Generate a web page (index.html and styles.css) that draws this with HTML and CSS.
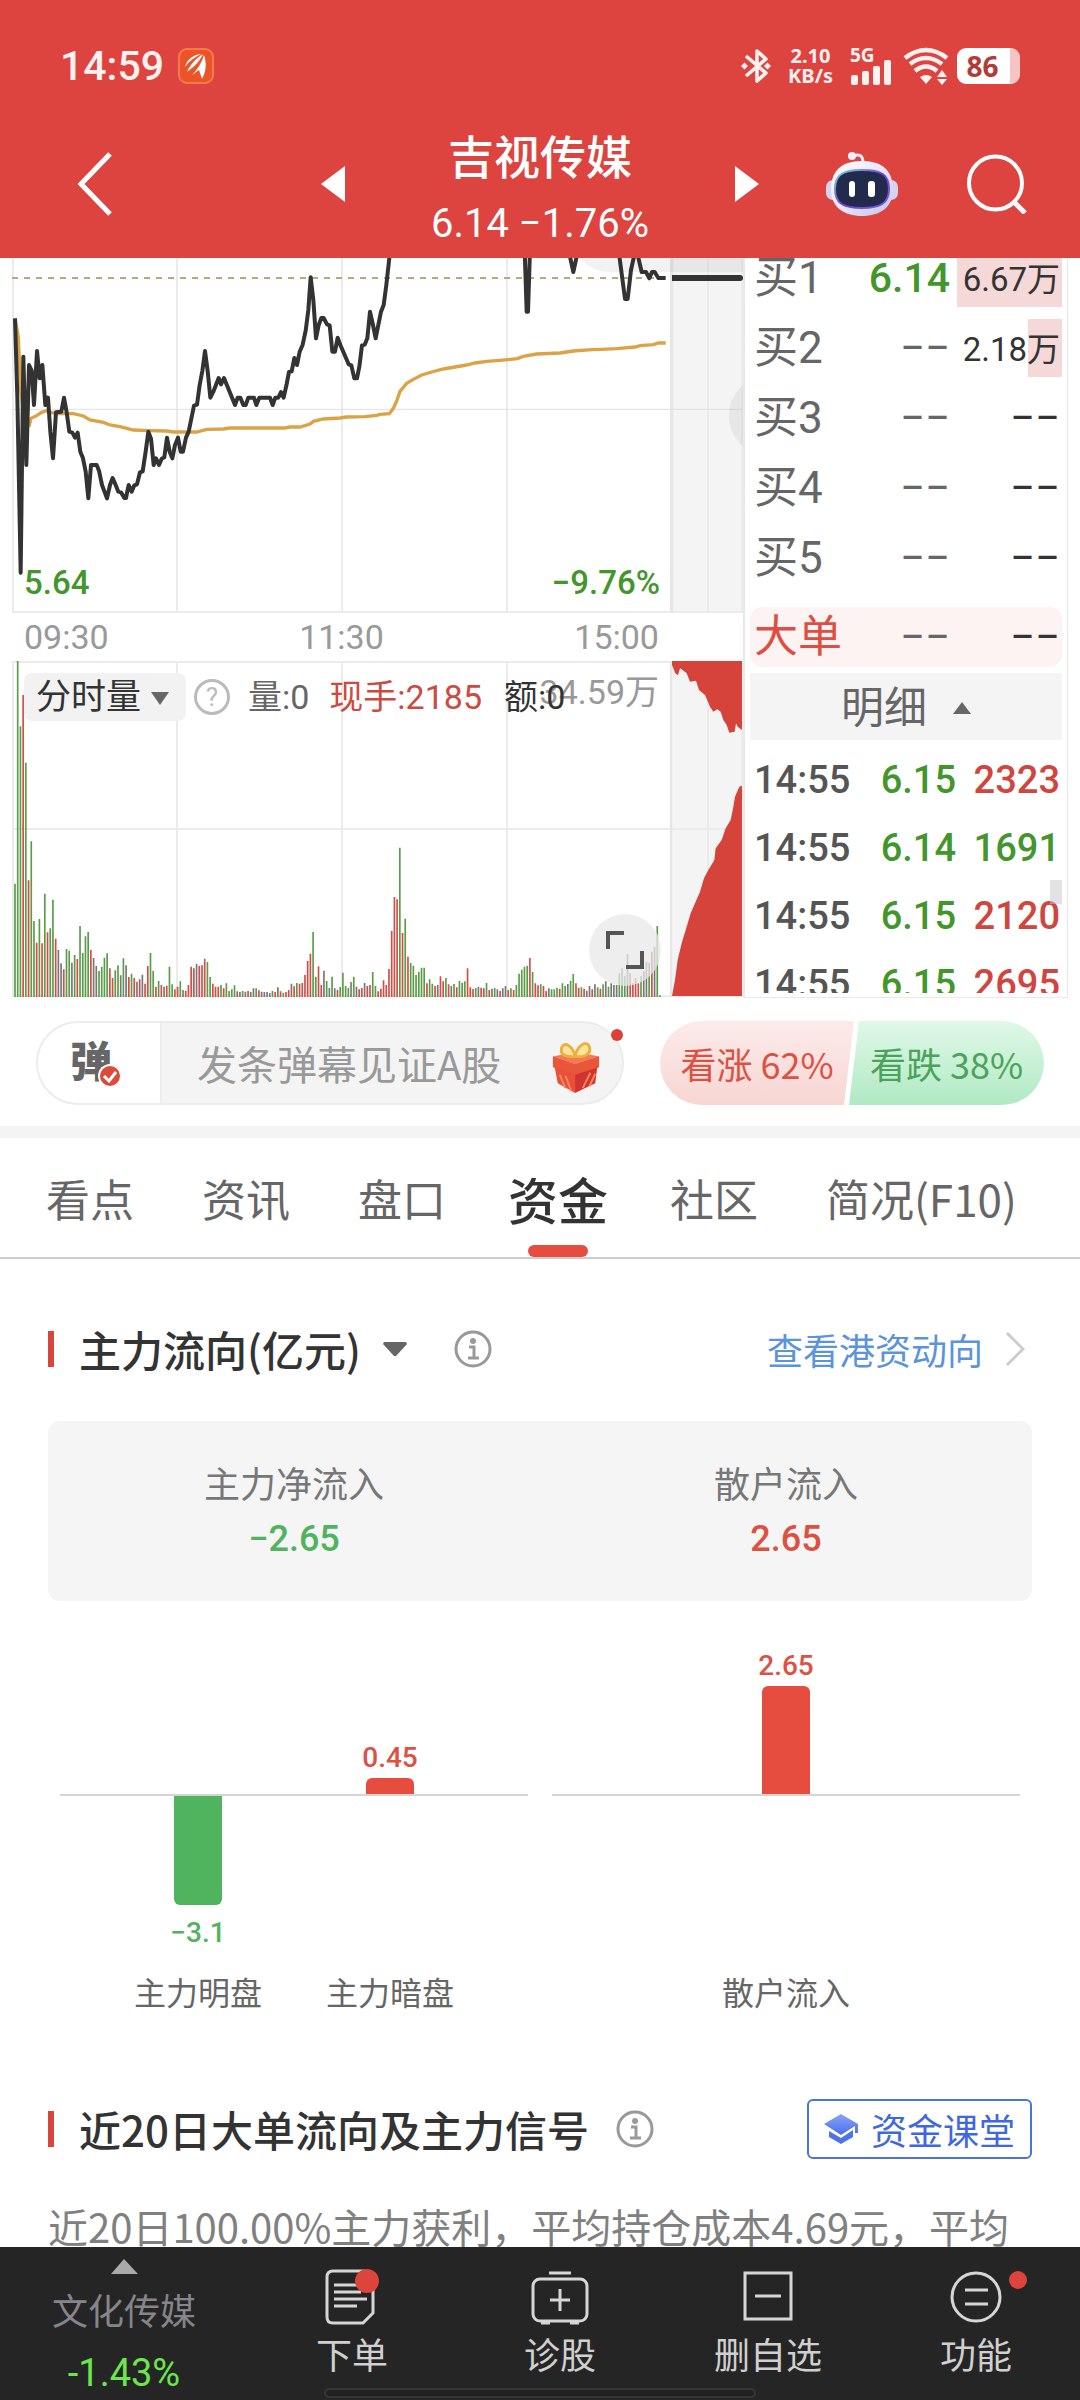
FILE: index.html
```html
<!DOCTYPE html>
<html lang="zh-CN">
<head>
<meta charset="utf-8">
<meta name="viewport" content="width=device-width, initial-scale=1">
<title>吉视传媒</title>
<link rel="stylesheet" href="styles.css">
</head>
<body>
<header class="top">
  <div class="status">
    <span class="clock">14:59</span>
    <svg class="app-badge" width="36" height="36" viewBox="0 0 36 36"><rect x="1" y="1" width="34" height="34" rx="8" fill="#ec5427" stroke="#f27c4f" stroke-width="2"/><path d="M7 19C9 11 15 7 23 6C17 9 11 13 7 19ZM9 24C13 15 19 10 25 6C22 13 16 19 9 24ZM14 27C20 21 24 14 26 7C29 15 28 24 24 31L21 22Z" fill="#fff"/></svg>
    <div class="status-right">
      <svg width="30" height="38" viewBox="0 0 30 38" fill="none" stroke="#fff1f0" stroke-width="3.6"><path d="M5 9L25 26L16 34V4L25 12L5 29" stroke-linejoin="round"/><path d="M0 19L3.500 15.500L7 19L3.500 22.500ZM23 19L26.500 15.500L30 19L26.500 22.500Z" fill="#fff1f0" stroke="none"/></svg>
      <span class="speed">2.10<br>KB/s</span>
      <div class="signal"><span>5G</span><svg width="42" height="26" viewBox="0 0 42 26" fill="#fff1f0"><rect x="1" y="16" width="7" height="10" rx="2"/><rect x="12" y="12" width="7" height="14" rx="2"/><rect x="23" y="7" width="7" height="19" rx="2"/><rect x="34" y="1" width="7" height="25" rx="2"/></svg></div>
      <svg class="wifi" width="46" height="38" viewBox="0 0 46 38" fill="none" stroke="#fff1f0" stroke-width="4.500"><path d="M2 11Q23 -5 44 11M7 17Q23 5 39 17M12 24Q23 15 34 24"/><path d="M17 30Q23 26 29 30L23 37ZM34 30L39 23L44 30ZM34 32H44L39 38Z" fill="#fff1f0" stroke="none"/></svg>
      <div class="battery"><span>86</span></div>
    </div>
  </div>
  <div class="titlebar">
    <button class="plain back" aria-label="返回"><svg width="36" height="64" viewBox="0 0 36 64"><path d="M33 2L4 32L33 62" fill="none" stroke="#fff" stroke-width="5"/></svg></button>
    <div class="switcher">
      <button class="plain" aria-label="上一只"><svg width="24" height="36"><path d="M24 0V36L0 18Z" fill="#fff"/></svg></button>
      <div class="stock"><h1>吉视传媒</h1><p>6.14 −1.76%</p></div>
      <button class="plain" aria-label="下一只"><svg width="24" height="36"><path d="M0 0V36L24 18Z" fill="#fff"/></svg></button>
    </div>
    <div class="tools">
      <button class="plain" aria-label="智能助手"><svg width="72" height="68" viewBox="0 0 72 68"><defs><linearGradient id="shell" x1="0" y1="0" x2="1" y2="1"><stop offset="0" stop-color="#fff"/><stop offset=".5" stop-color="#e8e6f8"/><stop offset="1" stop-color="#c4c4ec"/></linearGradient><linearGradient id="rim" x1="0" y1="0" x2="1" y2="1"><stop offset="0" stop-color="#7fd6e0"/><stop offset=".5" stop-color="#6f3fd0"/><stop offset="1" stop-color="#7a5be0"/></linearGradient></defs><path d="M27 6Q37 2 37 13" fill="none" stroke="#efeefb" stroke-width="3"/><circle cx="26" cy="6" r="4" fill="#efeefb"/><rect x="0" y="30" width="14" height="20" rx="7" fill="#d4d3f0"/><rect x="58" y="30" width="14" height="20" rx="7" fill="#d4d3f0"/><path d="M36 11C58 11 67 22 67 40C67 57 54 66 36 66C18 66 5 57 5 40C5 22 14 11 36 11Z" fill="url(#shell)"/><path d="M36 20C56 20 63 25 63 39C63 53 55 58 36 58C17 58 9 53 9 39C9 25 16 20 36 20Z" fill="#232b4c" stroke="url(#rim)" stroke-width="2"/><rect x="23" y="31" width="6" height="16" rx="3" fill="#fff"/><rect x="42" y="31" width="7" height="16" rx="3" fill="#fff"/></svg></button>
      <button class="plain" aria-label="搜索"><svg width="60" height="60" viewBox="0 0 60 60" fill="none" stroke="#fff"><circle cx="28.500" cy="29" r="26.500" stroke-width="4"/><path d="M47 48L58 59" stroke-width="5"/></svg></button>
    </div>
  </div>
</header>

<main class="feed">
  <section class="quote">
    <div class="charts">
      <div class="plot">
        <svg class="fill price" viewBox="0 24 2229 1065" preserveAspectRatio="none">
          <rect x="2010" y="24" width="222" height="1065" fill="#f4f4f4"/>
          <path d="M39 24V1089M531 24V1089M1026 24V1089M1521 24V1089M2124 24V1089M2227 24V1089M36 1086H2229" stroke="#ebebeb" stroke-width="6" fill="none"/>
          <path d="M36 478H2229" stroke="#e0e0e0" stroke-width="3"/>
          <path d="M2015 24V1089" stroke="#e6e6e6" stroke-width="10"/>
          <path d="M1735 20Q1775 66 1830 66H2232V20Z" fill="#000" opacity=".05"/>
          <circle cx="2307" cy="497" r="121" fill="#000" opacity=".05"/>
          <path d="M36 84H1990" stroke="#b9a77f" stroke-width="6" stroke-dasharray="18 18"/>
          <path d="M45 205L55 260L62 420L75 520L88 525L93 505L110 497L125 487L140 482L155 488L175 491H220L250 498L270 510L310 517L330 525L360 530L400 540L450 542L500 543L520 546H590L620 538L670 537L690 534H855L870 531H900L930 522L940 514L970 507L1020 504L1040 501L1095 500L1130 496L1140 493L1168 491L1180 475L1190 453L1200 424L1220 400L1240 388L1265 375L1295 366L1330 357L1400 345L1425 339L1460 334L1500 331L1552 326L1570 319L1610 312L1680 309L1720 303L1775 299L1805 298L1850 296L1905 291L1920 287L1960 284L1975 279H1997" fill="none" stroke="#dba345" stroke-width="10"/>
          <path id="price-line" fill="none" stroke="#333" stroke-width="12" stroke-linejoin="round" d="M45 205L52 440L62 968L70 320L79 645L87 345L95 362L102 465L111 303L119 385L127 345L136 465L144 443L151 545L159 625L168 487L184 485L192 443L200 487L208 545L217 548L225 563L233 548L241 605L249 625L257 665L265 745L273 645H290L297 662L306 705L321 745L330 705L338 684L347 705L355 725L363 727L373 744H378L386 705L395 725L403 706L411 703L420 667L428 664L437 605L445 545L453 566L461 645L468 625L477 645L485 626L493 622L501 563L509 605L517 625L525 585L534 563L542 605H549L558 563L566 545L582 467L591 464L599 405L607 363L615 303L623 363L631 443L640 425L656 384L663 403L672 384L705 465L713 443H721L730 465H737L745 443H762L769 465L778 443H810L818 465L826 443H835L843 426L851 443L860 402L867 366L875 364L883 324L891 345L899 305L908 284L917 242L925 180L932 82L940 150L948 265L956 225L964 204H971L981 223L989 226L997 305H1005L1013 263L1021 285L1046 343L1054 346L1063 385H1071L1078 350L1086 286L1094 284L1102 265L1110 185L1119 225L1127 265L1143 185L1151 165L1159 105L1168 24V0M1574 0L1580 185H1584L1590 0M1710 20L1720 66L1730 20M1857 10L1875 147H1883L1893 60L1904 10M1912 10L1925 66H1938L1948 85L1956 66H1964L1975 84H1997"/>
          <path d="M2016 84H2220" stroke="#333" stroke-width="18"/><circle cx="2220" cy="84" r="9" fill="#333"/>
        </svg>
        <div class="range"><span>5.64</span><span>−9.76%</span></div>
      </div>
      <div class="axis"><span>09:30</span><span>11:30</span><span>15:00</span></div>
      <div class="plot volume">
        <svg class="fill" viewBox="0 63 2229 1011" preserveAspectRatio="none">
          <rect x="2010" y="63" width="222" height="1008" fill="#f4f4f4"/>
          <path d="M39 63V1071M531 63V1071M1026 63V1071M1521 63V1071M2124 63V1071M2227 63V1071M36 66H2010M36 567H2229M36 1069H2229" stroke="#ebebeb" stroke-width="6" fill="none"/>
          <path d="M2013 63V1071" stroke="#e6e6e6" stroke-width="7"/>
          <g id="volume-bars"></g>
          <path fill="#d6433b" d="M2016 63H2226V270L2213 260L2208 250L2204 275L2188 278L2180 255L2170 240L2162 215L2152 208L2140 215L2130 200L2115 165L2097 150L2088 122L2070 125L2060 100L2045 88L2040 85L2034 106L2026 100L2016 75ZM2016 1068L2025 1020L2033 960L2045 910L2060 860L2072 820L2085 790L2100 755L2112 715L2125 690L2143 660L2147 625L2165 600L2177 565L2192 540L2200 500L2205 470L2218 440L2226 437V1068Z"/>
        </svg>
        <div class="legend">
          <button class="metric">分时量<svg width="18" height="13"><path d="M0 0H18L9 13Z" fill="#666"/></svg></button>
          <button class="help" aria-label="说明">?</button>
          <span class="vol">量:0</span><span class="now">现手:2185</span><span class="amt">额:0</span>
        </div>
        <span class="peak">34.59万</span>
        <button class="expand" aria-label="全屏"><svg width="38" height="38" fill="none" stroke="#555" stroke-width="4"><path d="M2 18V2H18M36 20V36H20"/></svg></button>
      </div>
    </div>
    <aside class="book">
      <div class="bids">
        <div class="bid"><span>买1</span><b class="down">6.14</b><em class="w-full">6.67万</em></div>
        <div class="bid"><span>买2</span><b>−−</b><em class="w-part">2.18万</em></div>
        <div class="bid"><span>买3</span><b>−−</b><em class="none">−−</em></div>
        <div class="bid"><span>买4</span><b>−−</b><em class="none">−−</em></div>
        <div class="bid"><span>买5</span><b>−−</b><em class="none">−−</em></div>
      </div>
      <div class="bid big"><span>大单</span><b>−−</b><em class="none">−−</em></div>
      <button class="detail">明细<svg width="18" height="12"><path d="M0 12H18L9 0Z" fill="#666"/></svg></button>
      <div class="trade-list">
        <table class="trades">
          <tr><td>14:55</td><td class="down">6.15</td><td class="up">2323</td></tr>
          <tr><td>14:55</td><td class="down">6.14</td><td class="down">1691</td></tr>
          <tr><td>14:55</td><td class="down">6.15</td><td class="up">2120</td></tr>
          <tr><td>14:55</td><td class="down">6.15</td><td class="up">2695</td></tr>
        </table>
        <i class="thumb"></i>
      </div>
    </aside>
  </section>

  <section class="barrage">
    <div class="compose">
      <button class="toggle" aria-label="弹幕开关"><b>弹</b><svg width="24" height="24" viewBox="0 0 24 24"><circle cx="12" cy="12" r="11" fill="#dc4a3c" stroke="#fff" stroke-width="2"/><path d="M6 12L11 17L18 8" fill="none" stroke="#fff" stroke-width="3"/></svg></button>
      <input type="text" placeholder="发条弹幕见证A股" aria-label="发条弹幕">
      <svg class="gift" width="48" height="54" viewBox="0 0 50 54"><path d="M1 15L24 23V53L6 43L3 27L1 26Z" fill="#e8503a"/><path d="M49 15L24 23V53L45 43L47 27L49 26Z" fill="#cf3430"/><path d="M1 15L25 10L49 15L24 23Z" fill="#f47a55"/><path d="M1 15V26L24 34V23ZM49 15V26L24 34V23Z" fill="#ea5639"/><path d="M8 34L14 48M14 35L20 51M40 32L32 48M45 33L39 46" stroke="#f4875a" stroke-width="2"/><path d="M24 15C14 16 8 13 10 6C13 -2 22 5 24 15C26 4 36 -3 39 5C41 13 34 16 24 15Z" fill="#fbe3a0" stroke="#eeb03c" stroke-width="3"/></svg>
      <i class="dot"></i>
    </div>
    <div class="vote"><button class="rise">看涨 62%</button><button class="fall">看跌 38%</button></div>
  </section>

  <nav class="tabs">
    <a href="#">看点</a><a href="#">资讯</a><a href="#">盘口</a><a href="#" class="active">资金</a><a href="#">社区</a><a href="#">简况(F10)</a>
  </nav>

  <section class="flow">
    <div class="head">
      <h2>主力流向(亿元)</h2>
      <svg width="24" height="14"><path d="M1 0H23L24 2L13 14H11L0 2Z" fill="#666"/></svg>
      <button class="info" aria-label="说明"><svg width="38" height="38" fill="none" stroke="#999" stroke-width="3"><circle cx="19" cy="19" r="17"/><path d="M15 17H20V27M14 28H25"/><circle cx="19" cy="11" r="3" fill="#999" stroke="none"/></svg></button>
      <a href="#" class="more">查看港资动向<svg width="20" height="36"><path d="M2 2L18 18L2 34" fill="none" stroke="#ccc" stroke-width="3"/></svg></a>
    </div>
    <div class="summary">
      <div><span>主力净流入</span><b class="green">−2.65</b></div>
      <div><span>散户流入</span><b class="red">2.65</b></div>
    </div>
    <div class="bars">
      <div class="group two">
        <div class="col"><div class="above"></div><div class="below"><i class="bar" style="height:110px"></i><b class="green">−3.1</b></div><span>主力明盘</span></div>
        <div class="col"><div class="above"><b class="red">0.45</b><i class="bar" style="height:16px"></i></div><div class="below"></div><span>主力暗盘</span></div>
      </div>
      <div class="group">
        <div class="col"><div class="above"><b class="red">2.65</b><i class="bar" style="height:108px"></i></div><div class="below"></div><span>散户流入</span></div>
      </div>
    </div>
  </section>

  <section class="signal-block">
    <div class="head">
      <h2>近20日大单流向及主力信号</h2>
      <button class="info" aria-label="说明"><svg width="38" height="38" fill="none" stroke="#999" stroke-width="3"><circle cx="19" cy="19" r="17"/><path d="M15 17H20V27M14 28H25"/><circle cx="19" cy="11" r="3" fill="#999" stroke="none"/></svg></button>
      <button class="lesson"><svg width="34" height="32" viewBox="0 0 34 32"><defs><linearGradient id="cap" x1="0" y1="0" x2="0" y2="1"><stop offset="0" stop-color="#8aa4fa"/><stop offset="1" stop-color="#4a6fe8"/></linearGradient></defs><path d="M17 1L34 11V20H31V13L17 22L0 11Z" fill="url(#cap)"/><path d="M5 18L17 25L29 17V24L17 31L5 24Z" fill="#4f74ea"/></svg>资金课堂</button>
    </div>
    <p>近20日100.00%主力获利，平均持仓成本4.69元，平均</p>
  </section>
</main>

<footer class="dock">
  <button class="sector"><svg width="27" height="15"><path d="M0 15L13 0L27 15Z" fill="#aaa"/></svg><span>文化传媒</span><b>-1.43%</b></button>
  <button><svg width="54" height="56" fill="none" stroke="#d6d6d6" stroke-width="3"><path d="M8 2H38Q48 2 48 10V44L38 54H8Q2 54 2 48V8Q2 2 8 2Z"/><path d="M9 16H32M9 23H36M9 30H42M9 37H32"/><circle cx="42" cy="12" r="12" fill="#dd443c" stroke="none"/></svg><span>下单</span></button>
  <button><svg width="58" height="56" fill="none" stroke="#d6d6d6" stroke-width="3"><rect x="2" y="10" width="54" height="42" rx="7"/><path d="M18 4H40M29 20V42M19 31H39M10 54H19M39 54H48"/></svg><span>诊股</span></button>
  <button><svg width="50" height="56" fill="none" stroke="#d6d6d6" stroke-width="3"><rect x="2" y="4" width="46" height="46"/><path d="M12 27H38"/></svg><span>删自选</span></button>
  <button class="fn"><svg width="54" height="56" fill="none" stroke="#d6d6d6" stroke-width="3"><circle cx="27" cy="28" r="24"/><path d="M16 21H39M16 35H39"/></svg><span>功能</span></button>
  <i class="home"></i>
</footer>
<script src="volume.js"></script>
</body>
</html>
```
FILE: volume.js
```js
// One entry per trading minute: colour key (g fall, r rise, k flat) and the y of the bar's top.
const data = `g731 g63 g259 r165 g368 r721 g604 g843 r908 g837 r910 g761 r877 g865 g779 r896 k930 k970 r988 g927
g932 k968 g945 r957 g858 g939 g889 g876 r930 k954 k978 g993 g980 g953 g940 r985 r1014 g991 g976 k1006
g955 k976 r1011 g1001 r1014 k1025 r1018 k1004 r1031 r978 g939 g993 r1040 g1023 r1035 k1040 r1037 g980 g1033 r1048
r1040 g1024 k1050 r1052 r1035 r980 r985 k972 r977 r976 r956 g966 g1011 r1031 r1040 r1040 g1035 r1045 g1030 g1053
g1048 g1036 r1054 k1056 g1053 k1055 r1053 k1056 k1045 g1045 r1051 k1055 k1056 k1056 k1059 g1053 r1056 k1042 r1054 g1058
r1056 r1050 k1031 r1039 g1029 r1031 r1029 r1005 r963 r941 g876 g1010 r979 r1035 k992 g1023 k1044 g1010 k1045 r1050
g1041 g998 g1038 g1044 k1026 g1010 k1040 r1048 r1044 k1029 r1038 r1035 g996 g1038 r1054 r1046 r1021 r1035 r987 r873
r771 r778 g623 r879 g836 r950 g969 g977 g1005 g995 g983 g983 r1030 g1018 g1031 r1038 k1035 r1009 r1024 g1014
r1033 k1038 g1032 r1042 g1023 g1028 g1024 r985 r1042 r1047 g1044 k1040 r1043 r1045 g1029 r1050 k1046 g1044 k1048 r1053
k1045 k1038 r1050 g1045 r1050 g1035 g1001 g989 g980 g977 r954 g996 r1030 r1036 g1033 r1038 r1053 k1045 g1048 g1048
g1043 r1046 g1030 g1038 k1032 g1022 g1002 r1030 r1043 g1042 r1046 k1052 k1038 r1048 k1033 g1042 r1046 g1033 k1024 g1040
k1030 k1035 k1035 g1000 g985 g1008 k942 r1000 r1030 r1014 r1030 g1008 k993 k965 g968 r935 k920 g858 k1066`.split(/\s+/);
const paths = { g: "", r: "", k: "" };
data.forEach((item, i) => {
  paths[item[0]] += `M${(45 + i * 8.13).toFixed(1)} 1071V${item.slice(1)}`;
});
const colors = { g: "#5a9c48", r: "#cf4f48", k: "#777" };
document.getElementById("volume-bars").innerHTML = Object.keys(paths)
  .map((k) => `<path d="${paths[k]}" stroke="${colors[k]}" stroke-width="5"/>`)
  .join("");
```
FILE: styles.css
```css
* { box-sizing: border-box; margin: 0; padding: 0; }
html, body { height: 100%; }
body {
  display: flex;
  flex-direction: column;
  background: #fff;
  color: #333;
  font-family: Roboto, "Noto Sans CJK SC", sans-serif;
}
svg { display: block; flex: none; }
button { border: 0; background: none; font: inherit; color: inherit; cursor: pointer; }
a { color: inherit; text-decoration: none; }
em, i { font-style: normal; }
.up { color: #d0453d; }
.down { color: #43962c; }
.green { color: #52b35f; }
.red { color: #dd5143; }

/* header */
.top { flex: none; background: #dd443f; color: #fff; padding-top: 42px; }
.status { display: flex; align-items: center; height: 48px; padding: 0 60px; color: #fff1f0; }
.clock { font-size: 41px; font-weight: 500; }
.app-badge { margin-left: 14px; }
.status-right { display: flex; align-items: center; gap: 17px; margin-left: auto; }
.speed { font: 700 20px/20px "Noto Sans", sans-serif; text-align: center; }
.signal { display: grid; justify-items: start; font: 700 19px/16px "Noto Sans", sans-serif; }
.signal svg { margin-top: -4px; }
.wifi { margin: 0 -9px 0 -6px; }
.battery {
  display: flex; align-items: center; justify-content: center;
  width: 63px; height: 36px; padding-right: 2px;
  border-radius: 9px; border-right: 10px solid #f5c4c3; background: #fff;
  color: #b33a35; font: 700 28px/36px "Noto Sans", sans-serif;
}
.titlebar { display: grid; grid-template-columns: 1fr 438px 1fr; align-items: center; height: 168px; padding-top: 20px; }
.plain { display: grid; place-items: center; }
.back { justify-self: start; margin-left: 77px; }
.switcher { display: flex; justify-content: space-between; align-items: center; }
.stock { padding-top: 14px; text-align: center; }
.stock h1 { font-size: 46px; line-height: 66px; font-weight: 500; }
.stock p { font-size: 40px; line-height: 66px; }
.tools { display: flex; align-items: center; justify-content: flex-end; gap: 69px; padding-right: 53px; }

/* scrolling content */
.feed { flex: 1; min-height: 0; overflow-y: auto; scrollbar-width: none; }
.quote { display: grid; grid-template-columns: 743fr 325fr; height: 740px; padding-right: 12px; overflow: hidden; }
.charts { display: flex; flex-direction: column; min-width: 0; }
.plot { position: relative; height: 355px; }
.fill { width: 100%; height: 100%; }
.range {
  position: absolute; left: 24px; right: 83px; bottom: 8px;
  display: flex; justify-content: space-between;
  color: #43962c; font-size: 33px; font-weight: 500; line-height: 44px;
}
.axis {
  display: flex; justify-content: space-between; align-items: center;
  height: 48px; padding: 0 84px 0 24px; color: #999; font-size: 34px;
}
.volume { height: 337px; }
.legend {
  position: absolute; left: 24px; top: 12px; z-index: 1;
  display: flex; align-items: center; height: 48px; font-size: 34px; line-height: 44px;
}
.metric {
  display: flex; align-items: center; gap: 10px; width: 162px; height: 48px;
  padding: 2px 0 0 12px; border-radius: 8px; background: #f2f2f2; color: #333;
  font-size: 35px; line-height: 48px; white-space: nowrap;
}
.help {
  width: 36px; height: 36px; margin: 0 18px 0 8px; border: 3px solid #bbb; border-radius: 50%;
  color: #bbb; font-size: 26px; line-height: 30px;
}
.vol { color: #666; margin-right: 20px; }
.now { color: #cc4a40; margin-right: 22px; }
.amt { color: #333; }
.peak { position: absolute; right: 84px; top: 7px; color: #999; font-size: 34px; line-height: 48px; }
.expand {
  position: absolute; right: 82px; bottom: 12px; width: 72px; height: 72px;
  display: grid; place-items: center; border-radius: 50%; background: rgba(232, 232, 232, .75);
}

/* order book */
.book {
  display: flex; flex-direction: column; min-width: 0; padding: 0 5px;
  border: 1px solid #e8e8e8; border-width: 0 1px 1px 2px; overflow: hidden;
}
.bids { display: grid; gap: 12px; margin-top: -9px; }
.bid {
  display: grid; grid-template-columns: 84px 116px 1fr; align-items: center;
  height: 58px; color: #666; font-size: 44px; line-height: 58px;
}
.bid span { padding-left: 4px; white-space: nowrap; }
.bid b { font-weight: 400; text-align: right; }
.bid .down { font-size: 41px; font-weight: 500; }
.bid em { height: 58px; margin-left: 7px; padding-right: 2px; color: #333; font-size: 33px; line-height: 62px; text-align: right; white-space: nowrap; }
.bid .none { font-size: 44px; line-height: 58px; }
.w-full { background: #f5d9d8; }
.w-part { background: linear-gradient(to left, #f5d9d8 34px, transparent 34px); }
.big { height: 60px; margin-top: 20px; border-radius: 12px; background: #fdf3f3; }
.big span { color: #dc4f42; }
.detail {
  display: flex; align-items: center; justify-content: center; gap: 26px;
  height: 67px; margin-top: 6px; padding-top: 2px; flex: none;
  background: #f4f4f4; color: #666; font-size: 43px; line-height: 60px;
}
.trade-list { position: relative; padding-top: 6px; height: 253px; overflow: hidden; }
.trades { width: 100%; border-collapse: collapse; color: #555; font-size: 38px; font-weight: 500; line-height: 68px; }
.trades td { text-align: right; }
.trades td:first-child { text-align: left; padding-left: 4px; }
.trades td:last-child { padding-right: 2px; width: 106px; }
.thumb { position: absolute; right: 0; top: 140px; width: 12px; height: 24px; background: rgba(200, 200, 206, .5); }

/* barrage row */
.barrage {
  display: grid; grid-template-columns: 588fr 384fr; gap: 36px; height: 140px; padding: 23px 36px 21px;
  border-bottom: 12px solid #f4f4f4;
}
.compose {
  position: relative; display: flex; align-items: center; height: 84px; min-width: 0;
  border: 2px solid #ececec; border-radius: 42px; background: #f4f4f4;
}
.toggle {
  display: flex; align-items: center; width: 124px; height: 80px; padding-left: 32px;
  border-right: 2px solid #ececec; border-radius: 40px 0 0 40px; background: #fff; color: #666;
}
.toggle b { font-size: 42px; font-weight: 900; line-height: 60px; }
.toggle svg { margin: 26px 0 0 -14px; }
.compose input {
  flex: 1; min-width: 0; padding-left: 35px; border: 0; outline: 0; background: none;
  color: #333; font: 40px/60px "Noto Sans CJK SC", sans-serif;
}
.compose input::placeholder { color: #999; opacity: 1; }
.gift { margin: 10px 22px 0 0; }
.dot { position: absolute; right: -1px; top: 6px; width: 12px; height: 12px; border-radius: 50%; background: #dc4038; }
.vote { display: grid; grid-template-columns: 194fr 194fr; }
.vote button { height: 84px; font: 36px/84px "Noto Sans CJK SC", sans-serif; white-space: nowrap; }
.rise {
  margin-right: -2px; border-radius: 42px 0 0 42px; color: #dd5143;
  background: linear-gradient(#fcebea, #f7d6d3);
  clip-path: polygon(0 0, 100% 0, calc(100% - 10px) 100%, 0 100%);
}
.fall {
  margin-left: -3px; border-radius: 0 42px 42px 0; color: #4ba35b;
  background: linear-gradient(#e0f8e8, #b0e9c3);
  clip-path: polygon(10px 0, 100% 0, 100% 100%, 0 100%);
}

/* tabs */
.tabs {
  display: flex; gap: 68px; height: 121px; padding: 0 46px; border-bottom: 2px solid #ccc;
  color: #666; font-size: 44px; line-height: 121px; white-space: nowrap;
  font-family: "Noto Sans CJK SC", sans-serif;
}
.active { position: relative; margin: 0 -6px; color: #333; font-size: 50px; font-weight: 500; }
.active::after {
  content: ""; position: absolute; left: 50%; bottom: 0; width: 60px; height: 12px;
  margin-left: -30px; border-radius: 6px; background: #e64d3f;
}

/* section heads */
.head { display: flex; align-items: center; height: 60px; padding: 0 48px; font-family: "Noto Sans CJK SC", sans-serif; }
.head::before { content: ""; width: 6px; height: 36px; background: #d8453b; }
.head h2 { margin-left: 25px; font-size: 42px; font-weight: 500; line-height: 60px; white-space: nowrap; }
.flow h2 { margin-right: 22px; }
.flow .info { margin-left: 47px; }
.signal-block .info { margin-left: 27px; }
.more { display: flex; align-items: center; gap: 22px; margin-left: auto; padding-right: 7px; color: #5b93dd; font-size: 36px; line-height: 60px; }
.lesson {
  display: flex; align-items: center; gap: 13px; height: 60px; margin-left: auto; padding: 0 15px;
  border: 2px solid #4a74d9; border-radius: 6px; color: #3f68e0; font-size: 36px; line-height: 56px;
}

/* fund flow */
.flow { padding-top: 60px; }
.summary {
  display: grid; grid-template-columns: 1fr 1fr; height: 180px; margin: 42px 48px 0; padding-top: 38px;
  border-radius: 12px; background: #f5f5f5; text-align: center;
}
.summary div { display: flex; flex-direction: column; }
.summary span { color: #777; font-size: 36px; line-height: 54px; }
.summary b { font-size: 36px; font-weight: 500; line-height: 52px; }
.bars { display: grid; grid-template-columns: 1fr 1fr; gap: 24px; padding: 0 60px; }
.group { display: grid; position: relative; }
.group::before { content: ""; position: absolute; left: 0; right: 0; top: 193px; height: 2px; background: #d4d4d4; }
.two { grid-template-columns: 1fr 1fr; padding: 0 42px; }
.col { display: flex; flex-direction: column; align-items: center; }
.above { display: flex; flex-direction: column; justify-content: flex-end; align-items: center; height: 193px; }
.below { display: flex; flex-direction: column; align-items: center; height: 176px; padding-top: 1px; }
.bar { width: 48px; }
.above .bar { border-radius: 6px 6px 0 0; background: #e64d3f; }
.below .bar { border-radius: 0 0 6px 6px; background: #50b35d; }
.bars b { font-size: 28px; font-weight: 500; line-height: 40px; }
.below b { margin-top: 8px; }
.col > span { color: #666; font-size: 32px; line-height: 48px; white-space: nowrap; }

/* signals */
.signal-block { padding-top: 81px; }
.signal-block p { margin-top: 37px; padding: 0 48px; height: 60px; overflow: hidden; color: #808080; font: 40px/60px "Noto Sans CJK SC", sans-serif; white-space: nowrap; }

/* bottom bar */
.dock {
  position: relative; flex: none; display: grid; grid-template-columns: 248fr 208fr 208fr 208fr 208fr;
  height: 153px; background: #252525; color: #d0d0d0; font-size: 36px; line-height: 50px;
}
.dock button { display: flex; flex-direction: column; align-items: center; padding-top: 22px; }
.dock button span { margin-top: 7px; }
.dock .sector { padding-top: 12px; color: #85858b; }
.dock .sector span { margin-top: 14px; }
.sector b { margin-top: 10px; color: #6be64c; font-weight: 400; font-size: 38px; }
.fn { position: relative; }
.fn::after { content: ""; position: absolute; right: 53px; top: 24px; width: 18px; height: 18px; border-radius: 50%; background: #dd443c; }
.home { position: absolute; left: 30%; right: 30%; bottom: 2px; height: 10px; border: 2px solid #363636; border-radius: 5px; background: #222; }
```
